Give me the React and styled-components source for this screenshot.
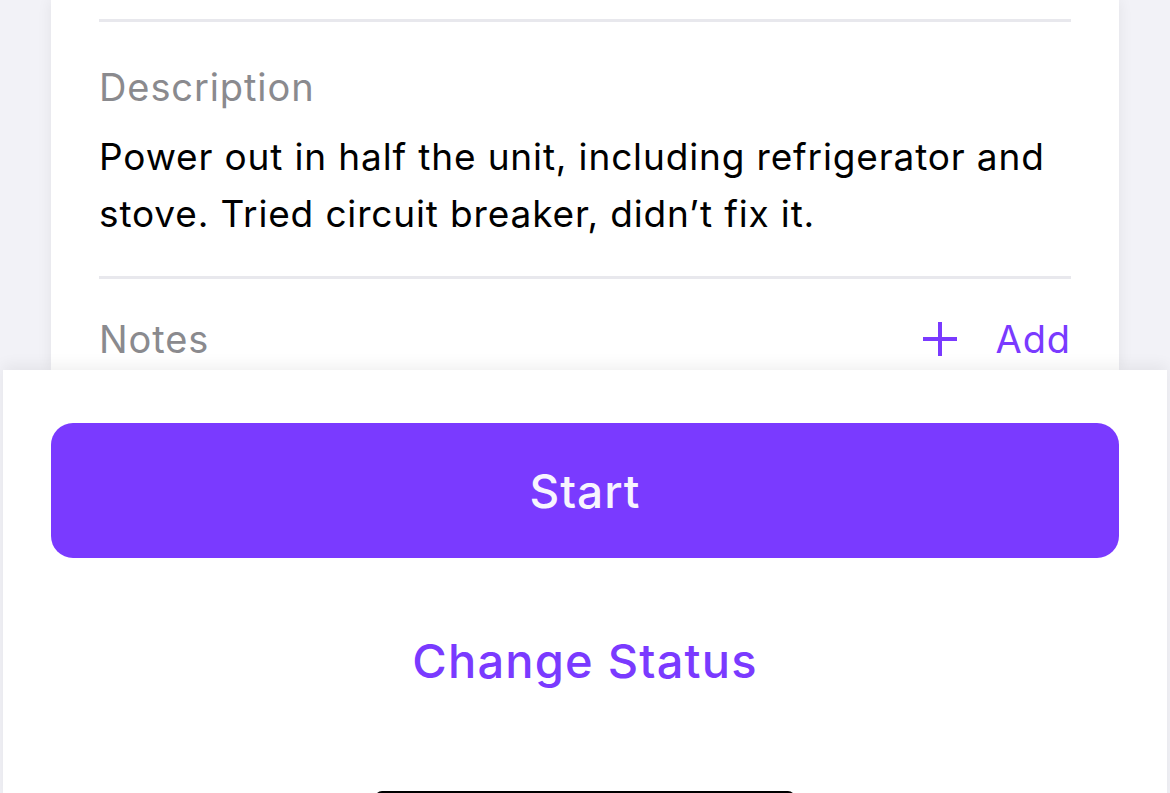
import styled, { createGlobalStyle } from "styled-components";

const GlobalStyle = createGlobalStyle`
  * { box-sizing: border-box; }
  html, body {
    margin: 0;
    padding: 0;
    background: #f2f2f7;
    font-family: Inter, "Noto Sans", sans-serif;
    overflow: hidden;
  }
`;

const Screen = styled.div`
  width: 1170px;
  height: 793px;
  display: flex;
  flex-direction: column;
  overflow: hidden;
`;

const Card = styled.div`
  margin: 0 51px;
  height: 370px;
  flex-shrink: 0;
  background: #ffffff;
  padding: 19px 48px 0;
  box-shadow: 0 0 14px rgba(0, 0, 0, 0.07);
`;

const Divider = styled.div`
  height: 3px;
  background: #e8e8ed;
`;

const Section = styled.div`
  padding: ${(p) => p.$pad};
`;

const Label = styled.div`
  font-size: 38px;
  line-height: 44px;
  color: #8a8a8e;
  letter-spacing: 0.9px;
`;

const Body = styled.p`
  margin: 19px 0 0;
  font-size: 37px;
  line-height: 57px;
  color: #000000;
  letter-spacing: 0.85px;
`;

const Row = styled.div`
  display: flex;
  align-items: center;
  justify-content: space-between;
`;

const AddButton = styled.button`
  border: none;
  background: none;
  padding: 0;
  display: flex;
  align-items: center;
  gap: 38px;
  font-family: inherit;
  font-size: 38px;
  line-height: 44px;
  letter-spacing: 0.9px;
  color: #7a3aff;
  cursor: pointer;
`;

const Sheet = styled.div`
  position: relative;
  z-index: 1;
  margin: 0 3px;
  flex: 1;
  background: #ffffff;
  box-shadow: 0 -5px 14px rgba(0, 0, 0, 0.06);
  display: flex;
  flex-direction: column;
  align-items: center;
  padding: 53px 48px 0;
`;

const PrimaryButton = styled.button`
  width: 100%;
  height: 135px;
  border: none;
  border-radius: 22px;
  background: #7a3aff;
  color: #f7f4ff;
  font-family: inherit;
  font-size: 46px;
  font-weight: 500;
  letter-spacing: 1px;
  cursor: pointer;
`;

const TextButton = styled.button`
  margin-top: 52px;
  height: 100px;
  border: none;
  background: none;
  color: #7a3aff;
  font-family: inherit;
  font-size: 47px;
  font-weight: 500;
  letter-spacing: 1.2px;
  cursor: pointer;
`;

const HomeIndicator = styled.div`
  margin-top: 81px;
  width: 420px;
  height: 14px;
  flex-shrink: 0;
  border-radius: 7px;
  background: #000000;
`;

const PlusIcon = () => (
  <svg width="36" height="36" viewBox="0 0 36 36" fill="none">
    <path d="M18 1v34M1 18h34" stroke="#7a3aff" strokeWidth="4" />
  </svg>
);

export default function App() {
  return (
    <Screen>
      <GlobalStyle />
      <Card>
        <Divider />
        <Section $pad="43px 0 34px">
          <Label>Description</Label>
          <Body>
            Power out in half the unit, including refrigerator and stove.
            Tried circuit breaker, didn’t fix it.
          </Body>
        </Section>
        <Divider />
        <Section $pad="38px 0 0">
          <Row>
            <Label>Notes</Label>
            <AddButton>
              <PlusIcon />
              Add
            </AddButton>
          </Row>
        </Section>
      </Card>
      <Sheet>
        <PrimaryButton>Start</PrimaryButton>
        <TextButton>Change Status</TextButton>
        <HomeIndicator />
      </Sheet>
    </Screen>
  );
}
